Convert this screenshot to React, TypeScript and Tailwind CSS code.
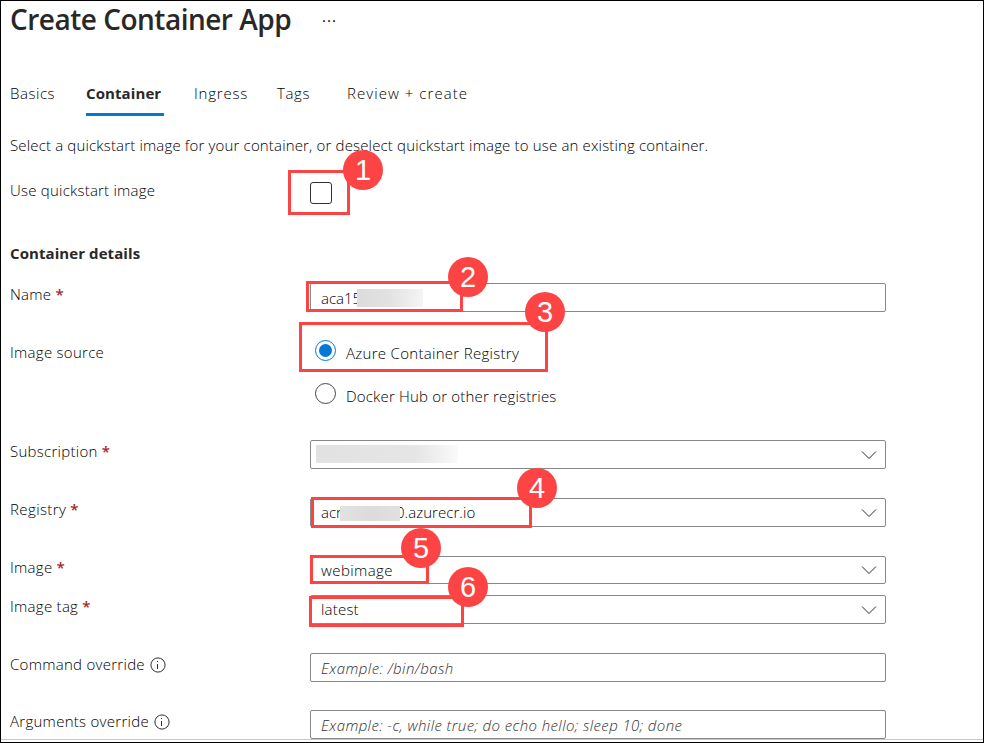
import type { ReactNode } from "react";

function InfoIcon() {
  return (
    <svg width="16" height="16" viewBox="0 0 16 16" fill="none" className="shrink-0">
      <circle cx="8" cy="8" r="7.1" stroke="#323130" strokeWidth="1" />
      <path d="M7.5 7v5" stroke="#323130" strokeWidth="1" />
      <path d="M7.5 4v1" stroke="#323130" strokeWidth="1" />
    </svg>
  );
}

function Chevron() {
  return (
    <svg width="16" height="10" viewBox="0 0 16 10" fill="none" className="mr-2 shrink-0">
      <path d="M1 1.5l7 7 7-7" stroke="#292827" strokeWidth="1" />
    </svg>
  );
}

type RowProps = {
  label: string;
  labelClass?: string;
  height: string;
  required?: boolean;
  info?: boolean;
  children: ReactNode;
};

function Row({ label, labelClass = "tracking-[0.28px]", height, required, info, children }: RowProps) {
  return (
    <div className={`flex shrink-0 ${height}`}>
      <div className="flex h-5 w-[300px] shrink-0 pt-1 whitespace-nowrap">
        <span className={labelClass}>{label}</span>
        {required && <span className="ml-1 font-semibold text-[#a4262c]">*</span>}
        {info && (
          <span className="mt-[3px] ml-[5px]">
            <InfoIcon />
          </span>
        )}
      </div>
      {children}
    </div>
  );
}

type FieldProps = {
  height?: string;
  pad?: string;
  select?: boolean;
  children?: ReactNode;
};

function Field({ height = "h-[29px]", pad = "pt-[3px]", select, children }: FieldProps) {
  return (
    <div
      className={`mt-[3px] flex w-[576px] justify-between rounded-[2px] border border-[#8a8886] bg-white pl-[10px] whitespace-nowrap ${height}`}
    >
      <div className={`flex ${pad}`}>{children}</div>
      {select && (
        <div className="flex items-center">
          <Chevron />
        </div>
      )}
    </div>
  );
}

function Radio({ checked }: { checked?: boolean }) {
  return (
    <span
      className={`flex size-[21px] shrink-0 items-center justify-center rounded-full border ${
        checked ? "border-[#0078d4]" : "border-[#484644]"
      }`}
    >
      {checked && <span className="size-[13px] rounded-full bg-[#0078d4]" />}
    </span>
  );
}

const outlines = [
  "left-[288px] top-[170px] w-[62px] h-[45px]",
  "left-[306px] top-[281px] w-[157px] h-[31px]",
  "left-[299px] top-[322px] w-[249px] h-[50px]",
  "left-[311px] top-[497px] w-[221px] h-[31px]",
  "left-[310px] top-[555px] w-[119px] h-[29px]",
  "left-[309px] top-[596px] w-[155px] h-[31px]",
];

const badges = [
  "left-[343px] top-[150px]",
  "left-[448px] top-[257px]",
  "left-[525px] top-[292px]",
  "left-[517px] top-[468px]",
  "left-[401px] top-[528px]",
  "left-[448px] top-[567px]",
];

export default function App() {
  return (
    <div className="relative flex h-[743px] w-[984px] flex-col overflow-hidden border border-black bg-white pl-[9px] font-['Open_Sans','Noto_Sans',sans-serif] text-[15px] leading-5 font-light text-black">
      <header className="flex h-[72px] shrink-0 whitespace-nowrap">
        <h1 className="w-[281px] text-[28px] leading-[37px] font-semibold tracking-[-0.5px] text-[#292827]">
          Create Container App
        </h1>
        <span className="mt-[9px] ml-[31px] font-normal tracking-[1px]">···</span>
      </header>

      <nav className="flex h-[43px] shrink-0 pt-[10px] whitespace-nowrap">
        <span className="w-[76px] tracking-[0.55px]">Basics</span>
        <span className="mr-[30px] h-[33px] w-[78px] border-b-3 border-[#0078d4] font-bold tracking-[0.1px] text-[#292827]">
          Container
        </span>
        <span className="w-[83px] tracking-[0.8px]">Ingress</span>
        <span className="w-[69px] tracking-[0.6px]">Tags</span>
        <span className="ml-px tracking-[1.05px]">Review + create</span>
      </nav>

      <p className="h-[58px] shrink-0 pt-[19px] tracking-[0.16px] whitespace-nowrap">
        Select a quickstart image for your container, or deselect quickstart image to use an existing container.
      </p>

      <div className="flex h-[63px] shrink-0">
        <span className="w-[300px] pt-[6px] tracking-[0.22px]">Use quickstart image</span>
        <span className="mt-[8px] size-[22px] rounded-[3px] border border-[#323130]" />
      </div>

      <h2 className="h-[43px] shrink-0 pt-[6px] font-bold tracking-[0.08px] text-[#292827]">Container details</h2>

      <Row label="Name" height="h-[58px]" required>
        <Field pad="pt-1">aca15</Field>
      </Row>

      <Row label="Image source" height="h-[99px]">
        <div className="flex flex-col gap-[22px] pt-[2px] pl-[5px]">
          <div className="flex h-[21px]">
            <Radio checked />
            <span className="ml-[10px] pt-[3px] tracking-[0.3px]">Azure Container Registry</span>
          </div>
          <div className="flex h-[21px]">
            <Radio />
            <span className="ml-[10px] pt-[3px] tracking-[0.18px]">Docker Hub or other registries</span>
          </div>
        </div>
      </Row>

      <Row label="Subscription" height="h-[58px]" required>
        <Field select>
          <span className="mt-[1px] -ml-[5px] h-[18px] w-[142px] bg-linear-to-r from-[#e2e2e2] via-[#e5e5e5] via-70% to-[#fafafa]" />
        </Field>
      </Row>

      <Row label="Registry" labelClass="tracking-[0.4px]" height="h-[58px]" required>
        <Field select>
          <span className="w-[19px]">acr</span>
          <span className="relative z-10 mt-1 h-[15px] w-[60px] bg-linear-to-r from-[#e2e2e2] via-[#dcdcdc] to-[#e0e0e0]" />
          <span className="-ml-1 tracking-[0.05px]">0.azurecr.io</span>
        </Field>
      </Row>

      <Row label="Image" height="h-[39px]" required>
        <Field height="h-[28px]" select>
          <span className="tracking-[0.4px]">webimage</span>
        </Field>
      </Row>

      <Row label="Image tag" height="h-[58px]" required>
        <Field select>
          <span className="tracking-[0.2px]">latest</span>
        </Field>
      </Row>

      <Row label="Command override" height="h-[57px]" info>
        <Field pad="pt-1">
          <span className="tracking-[0.45px] text-[#323130] italic">Example: /bin/bash</span>
        </Field>
      </Row>

      <Row label="Arguments override" height="h-[32px]" info>
        <Field pad="pt-1">
          <span className="tracking-[0.4px] text-[#323130] italic">
            Example: -c, while true; do echo hello; sleep 10; done
          </span>
        </Field>
      </Row>

      <div className="-ml-[9px] h-px shrink-0 bg-[#c8c8c8]" />

      <span className="absolute top-[288px] left-[356px] h-[18px] w-[66px] bg-linear-to-r from-[#dcdcdc] via-[#e2e2e2] to-[#f5f5f5]" />
      <div className="absolute -top-px -left-px">
        {outlines.map((box) => (
          <span key={box} className={`absolute z-20 border-3 border-[#fd4444] ${box}`} />
        ))}
        {badges.map((place, index) => (
          <span
            key={place}
            className={`absolute z-20 flex size-10 items-center justify-center rounded-full bg-[#fd4444] font-['Liberation_Sans',sans-serif] text-[29px] leading-none font-normal text-white ${place}`}
          >
            {index + 1}
          </span>
        ))}
      </div>
    </div>
  );
}
